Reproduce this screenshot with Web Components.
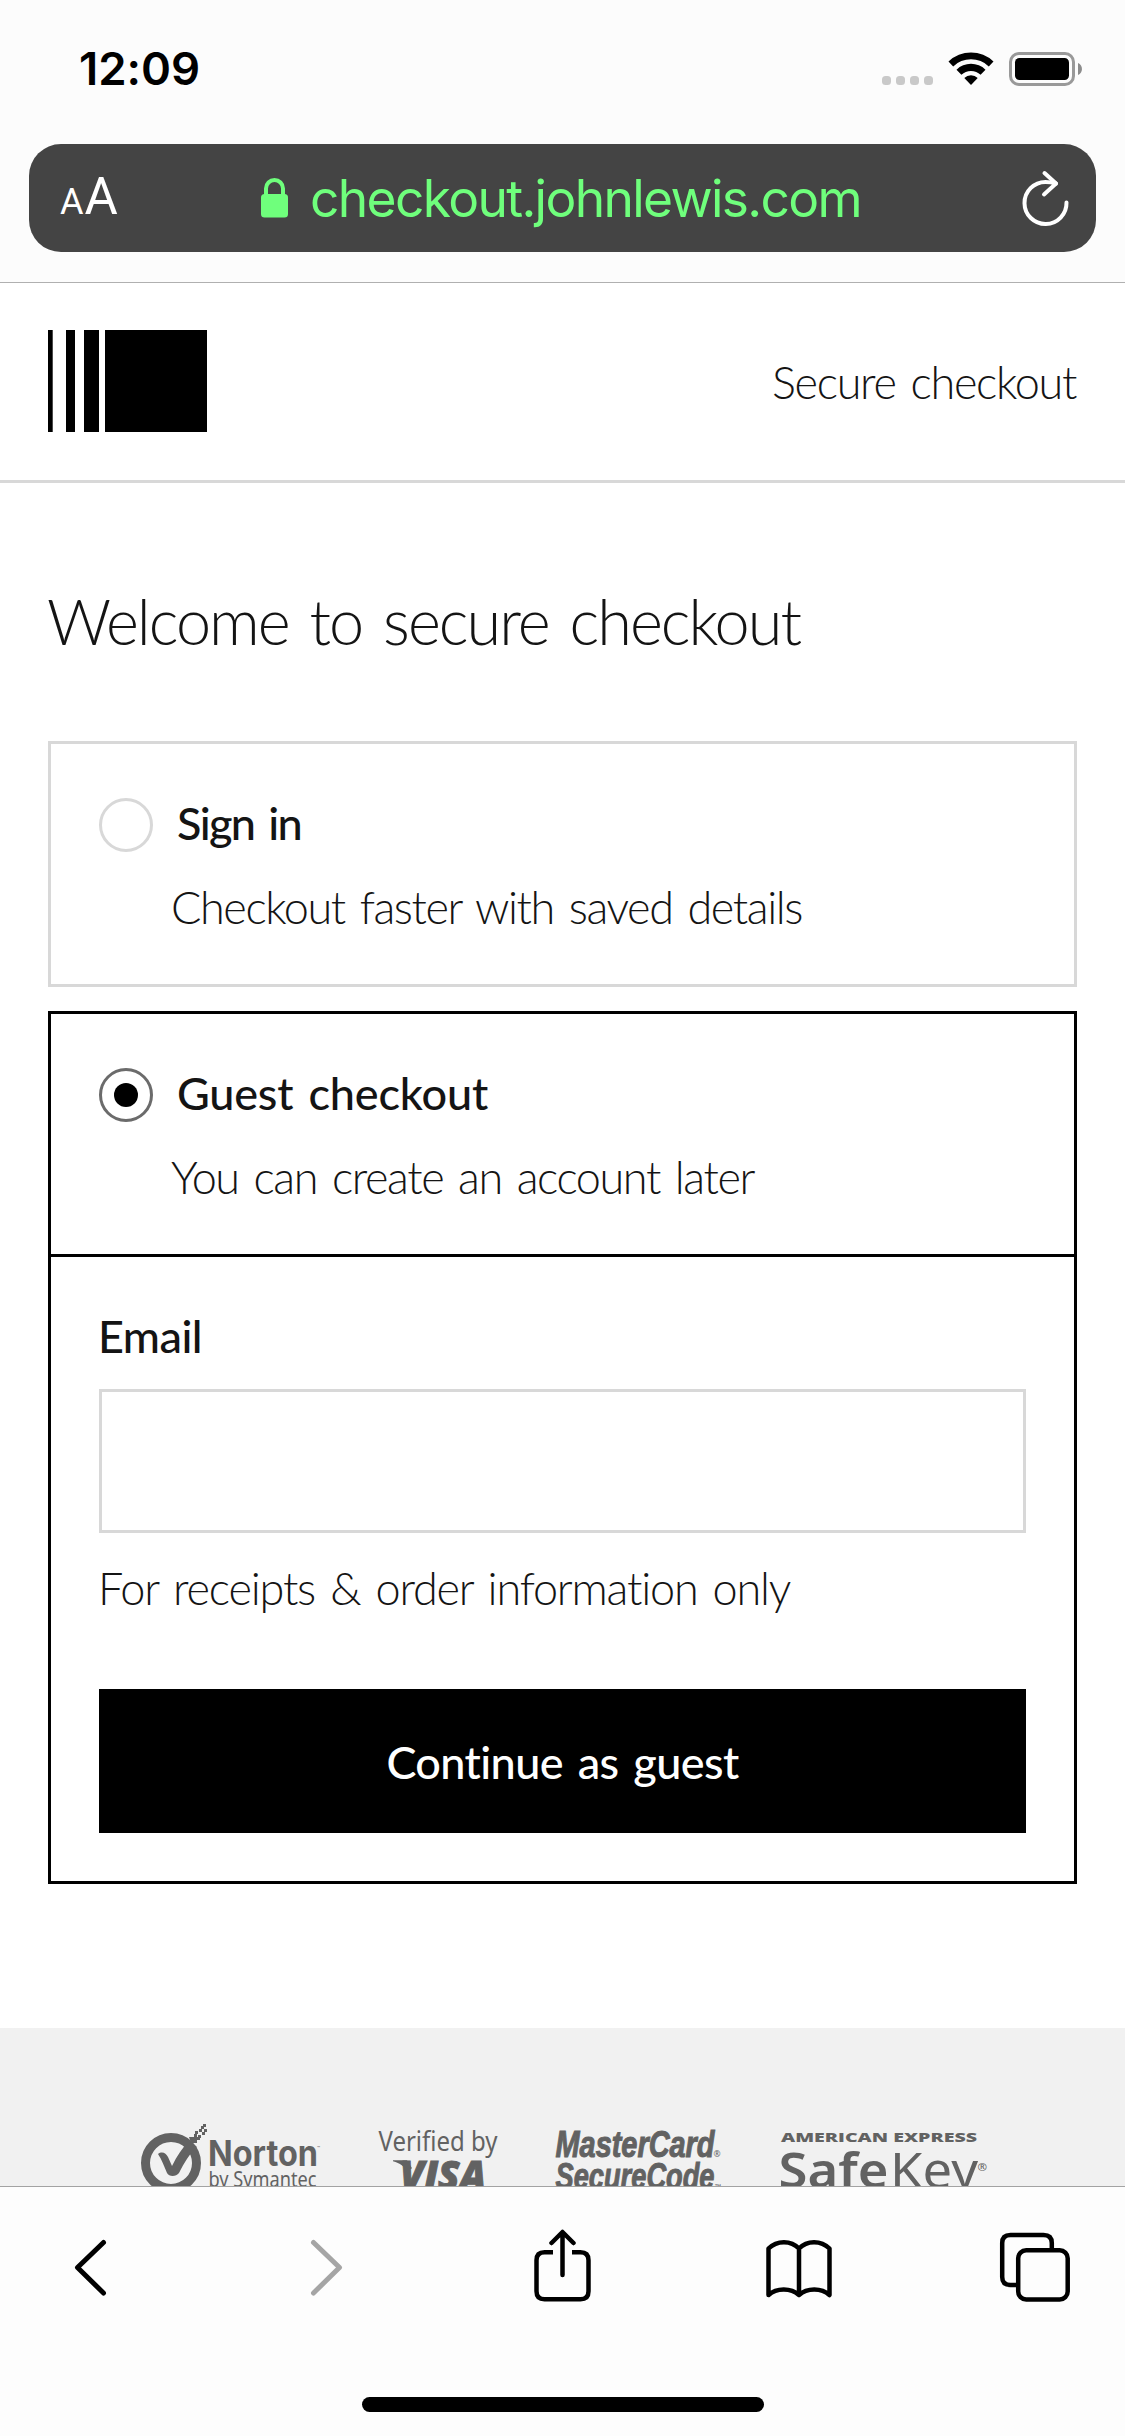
<!DOCTYPE html>
<html lang="en">
<head>
<meta charset="utf-8">
<title>Secure checkout</title>
<style>
    body {
        margin: 0;
        background: #fff;
        color: #141414;
        font-family: Lato, "Liberation Sans", sans-serif;
    }
</style>
</head>
<body>
<checkout-screen>
    <status-bar slot="top" time="12:09"></status-bar>
    <address-bar slot="top"><fit-text width="551">checkout.johnlewis.com</fit-text></address-bar>

    <site-header><fit-text width="304">Secure checkout</fit-text></site-header>
    <checkout-main>
        <fit-text slot="title" width="753">Welcome to secure checkout</fit-text>
        <option-card>
            <fit-text slot="label" width="124">Sign in</fit-text>
            <fit-text slot="detail" width="631">Checkout faster with saved details</fit-text>
        </option-card>
        <option-card selected>
            <fit-text slot="label" width="311">Guest checkout</fit-text>
            <fit-text slot="detail" width="583">You can create an account later</fit-text>
            <guest-form slot="form">
                <fit-text slot="label" width="104">Email</fit-text>
                <fit-text slot="hint" width="693">For receipts &amp; order information only</fit-text>
                <fit-text slot="action" width="353">Continue as guest</fit-text>
            </guest-form>
        </option-card>
    </checkout-main>
    <trust-footer></trust-footer>

    <tool-bar slot="bottom"></tool-bar>
</checkout-screen>

<script>
class BaseElement extends HTMLElement {
    connectedCallback() {
        if (this.shadowRoot) return;
        this.attachShadow({mode: "open"});
        this.shadowRoot.innerHTML = this.render();
    }
}

// Spreads a single line of text over a given width with letter spacing
class FitText extends BaseElement {
    connectedCallback() {
        super.connectedCallback();
        const span = this.shadowRoot.querySelector("span");
        const target = Number(this.getAttribute("width"));
        const spacing = (target - span.getBoundingClientRect().width) / this.textContent.length;
        span.style.letterSpacing = `${spacing}px`;
    }

    render() {
        return `
            <style>
                :host { display: block; white-space: nowrap; }
                span { display: inline-block; word-spacing: 0.09em; }
            </style>
            <span><slot></slot></span>
        `;
    }
}

class CheckoutScreen extends BaseElement {
    render() {
        return `
            <style>
                :host {
                    display: flex;
                    flex-direction: column;
                    width: 1125px;
                    height: 2436px;
                    overflow: hidden;
                }
                .top {
                    flex: none;
                    box-sizing: border-box;
                    height: 283px;
                    background: #fcfcfc;
                    border-bottom: 1px solid #b0b0b0;
                }
                .page { flex: 1; min-height: 0; overflow: hidden; }
            </style>
            <div class="top"><slot name="top"></slot></div>
            <div class="page"><slot></slot></div>
            <slot name="bottom"></slot>
        `;
    }
}

class StatusBar extends BaseElement {
    render() {
        return `
            <style>
                :host {
                    display: flex;
                    align-items: center;
                    justify-content: space-between;
                    box-sizing: border-box;
                    height: 138px;
                    padding: 0 43px 0 79px;
                    color: #000;
                    font: 600 45.5px/54px Inter, "Liberation Sans", sans-serif;
                }
                svg { display: block; }
            </style>
            <fit-text width="121">${this.getAttribute("time")}</fit-text>
            <svg width="201" height="36" viewBox="881 51 201 36">
                <g fill="#c9c9c9">
                    <rect x="882" y="76" width="9" height="9" rx="3.5"/>
                    <rect x="896" y="76" width="9" height="9" rx="3.5"/>
                    <rect x="910" y="76" width="9" height="9" rx="3.5"/>
                    <rect x="924" y="76" width="9" height="9" rx="3.5"/>
                </g>
                <path d="M948.5 61.5a32.5 32.5 0 0 1 45 0l-4.7 4.9a25.6 25.6 0 0 0-35.6 0z"/>
                <path d="M956.5 69.7a20.8 20.8 0 0 1 29 0l-4.9 5.1a13.9 13.9 0 0 0-19.2 0z"/>
                <path d="M964.3 78a9.7 9.7 0 0 1 13.4 0L971 85z"/>
                <rect x="1010.5" y="53.5" width="63" height="31" rx="8.5" fill="none" stroke="#999" stroke-width="3"/>
                <rect x="1015" y="58" width="54" height="22" rx="4.5"/>
                <path fill="#8c8c8c" d="M1078 63c5.3 2 5.3 10 0 12z"/>
            </svg>
        `;
    }
}

class AddressBar extends BaseElement {
    render() {
        return `
            <style>
                :host {
                    display: flex;
                    align-items: center;
                    box-sizing: border-box;
                    height: 108px;
                    margin: 6px 29px 0;
                    padding: 0 27px 0 31px;
                    border-radius: 32px;
                    background: #444;
                    color: #6fff7c;
                    font: 400 51.5px/60px Inter, "Liberation Sans", sans-serif;
                }
                .size {
                    display: flex;
                    align-items: baseline;
                    gap: 1px;
                    width: 201px;
                    padding-top: 2px;
                    color: #fff;
                    font-family: Roboto, "Liberation Sans", sans-serif;
                    font-size: 51px;
                }
                .size small { font-size: 36px; }
                .url { display: flex; align-items: center; gap: 22px; flex: 1; }
                svg { display: block; }
            </style>
            <div class="size"><small>A</small>A</div>
            <div class="url">
                <svg width="27" height="40" viewBox="0 0 27 40">
                    <rect y="16" width="27" height="23.5" rx="3.5" fill="currentColor"/>
                    <path d="M5 18v-7.5a8.5 8.5 0 0 1 17 0V18" fill="none" stroke="currentColor" stroke-width="4"/>
                </svg>
                <slot></slot>
            </div>
            <svg width="48" height="58" viewBox="1021 169 48 58" fill="none" stroke="#fff" stroke-width="4" stroke-linecap="round" stroke-linejoin="round">
                <path d="M1066.5 202.5a21 21 0 1 1-21-20.5q5 0 10.5 1.5"/>
                <path d="M1044.5 173l11.5 10.5-12 11"/>
            </svg>
        `;
    }
}

class SiteHeader extends BaseElement {
    render() {
        return `
            <style>
                :host {
                    display: flex;
                    align-items: center;
                    justify-content: space-between;
                    box-sizing: border-box;
                    height: 200px;
                    padding: 0 49px 0 48px;
                    border-bottom: 3px solid #d8d8d8;
                    font-size: 45px;
                    font-weight: 300;
                    line-height: 54px;
                }
                svg { display: block; margin-bottom: 1px; }
            </style>
            <svg width="159" height="102" viewBox="0 0 159 102">
                <path d="M0 0h4.7v102H0zM18 0h9v102h-9zM36 0h15v102H36zM57 0h102v102H57z"/>
            </svg>
            <slot></slot>
        `;
    }
}

class CheckoutMain extends BaseElement {
    render() {
        return `
            <style>
                :host {
                    display: flex;
                    flex-direction: column;
                    gap: 24px;
                    padding: 98px 48px 144px;
                }
                h1 {
                    margin: 0 0 56px -1px;
                    font-size: 63px;
                    font-weight: 300;
                    line-height: 80px;
                }
            </style>
            <h1><slot name="title"></slot></h1>
            <slot></slot>
        `;
    }
}

class OptionCard extends BaseElement {
    render() {
        return `
            <style>
                :host {
                    display: block;
                    border: 3px solid #d8d8d8;
                    font-size: 45px;
                    line-height: 54px;
                }
                :host([selected]) { border-color: #000; }
                .option { padding: 54px 48px 50px; }
                .row { display: flex; gap: 24px; }
                .radio {
                    display: grid;
                    place-items: center;
                    box-sizing: border-box;
                    width: 54px;
                    height: 54px;
                    border: 3px solid #d8d8d8;
                    border-radius: 50%;
                }
                :host([selected]) .radio { border-color: #6b6b6b; }
                :host([selected]) .radio::after {
                    content: "";
                    width: 24px;
                    height: 24px;
                    border-radius: 50%;
                    background: #000;
                }
                .label { font-weight: 500; line-height: 50px; }
                .detail { padding: 28px 0 0 72px; font-weight: 300; }
                .form { border-top: 3px solid #000; }
                :host(:not([selected])) .form { display: none; }
            </style>
            <div class="option">
                <div class="row">
                    <div class="radio"></div>
                    <div class="label"><slot name="label"></slot></div>
                </div>
                <div class="detail"><slot name="detail"></slot></div>
            </div>
            <div class="form"><slot name="form"></slot></div>
        `;
    }
}

class GuestForm extends BaseElement {
    render() {
        return `
            <style>
                :host { display: block; padding: 52px 48px 48px; }
                label { display: block; margin-left: -1px; font-weight: 500; }
                input {
                    display: block;
                    box-sizing: border-box;
                    width: 100%;
                    height: 144px;
                    margin: 26px 0 28px;
                    padding: 0 24px;
                    border: 3px solid #d8d8d8;
                    background: #fff;
                    font: inherit;
                }
                .hint { margin-left: -1px; font-weight: 300; }
                button {
                    display: flex;
                    align-items: center;
                    justify-content: center;
                    box-sizing: border-box;
                    width: 100%;
                    height: 144px;
                    margin-top: 74px;
                    padding: 2px 0 0;
                    border: 0;
                    background: #000;
                    color: #fff;
                    font: 500 45px/54px Lato, "Liberation Sans", sans-serif;
                }
            </style>
            <label for="email"><slot name="label"></slot></label>
            <input id="email" type="email">
            <div class="hint"><slot name="hint"></slot></div>
            <button type="button"><slot name="action"></slot></button>
        `;
    }
}

class TrustFooter extends BaseElement {
    render() {
        return `
            <style>
                :host {
                    display: flex;
                    align-items: flex-start;
                    box-sizing: border-box;
                    height: 220px;
                    padding: 92px 0 0 138px;
                    background: #f1f1f1;
                }
                svg { flex: none; display: block; fill: #626262; }
                .norton { margin-right: 50px; }
                .visa { margin-right: 50px; }
                .mastercard { margin-right: 46px; }
            </style>
            <!-- Norton by Symantec -->
            <svg class="norton" width="186" height="80" viewBox="138 2120 186 80">
                <circle cx="171" cy="2163" r="25.500" fill="none" stroke="#626262" stroke-width="9"/>
                <path d="M158 2154c4-3 8-1 10 3l4 9c5-10 10-18 17-25l8 6c-7 6-13 16-18 26-3 4-10 4-12 0-3-7-5-13-9-19z"/>
                <path d="M189 2137h5v-3h3v3h3v3h-3v3h-6zM195 2131h3v3h-3zM199 2129h3v3h-3zM202 2132h3v3h-3zM201 2126h3v3h-3zM204 2129h3v3h-3zM198 2135h3v3h-3zM203 2124h3v3h-3z"/>
                <text x="208" y="2165.500" font-family="Inter" font-weight="700" font-size="35.500" textLength="110" lengthAdjust="spacingAndGlyphs">Norton</text>
                <text x="317" y="2150" font-family="Inter" font-size="5">™</text>
                <text x="208.500" y="2187" font-family="Noto Sans" font-size="21" textLength="108" lengthAdjust="spacingAndGlyphs">by Symantec</text>
            </svg>
            <!-- Verified by Visa -->
            <svg class="visa" width="128" height="80" viewBox="374 2120 128 80">
                <text x="378.500" y="2151" font-family="Noto Sans" font-size="27.500" textLength="119" lengthAdjust="spacingAndGlyphs">Verified by</text>
                <path d="M393 2160.300h14l5 8-6 3c-1-5-6-8-13-10z"/>
                <text x="400" y="2189.500" font-family="Open Sans" font-style="italic" font-weight="800" font-size="40.500" textLength="86" lengthAdjust="spacingAndGlyphs" stroke="#626262">VISA</text>
            </svg>
            <!-- MasterCard SecureCode -->
            <svg class="mastercard" width="180" height="80" viewBox="552 2120 180 80">
                <g font-family="Liberation Sans" font-style="italic" font-weight="700" font-size="36" stroke="#626262">
                    <text x="555.500" y="2156.500" textLength="159" lengthAdjust="spacingAndGlyphs">MasterCard</text>
                    <text x="555.500" y="2189" textLength="159" lengthAdjust="spacingAndGlyphs">SecureCode</text>
                </g>
                <text x="713.500" y="2157" font-family="Noto Sans" font-size="8.500">®</text>
                <text x="715" y="2189.500" font-family="Noto Sans" font-size="8">™</text>
            </svg>
            <!-- American Express SafeKey -->
            <svg width="214" height="80" viewBox="778 2120 214 80">
                <text x="781" y="2142" font-family="Open Sans" font-weight="800" font-size="13" textLength="196" lengthAdjust="spacingAndGlyphs">AMERICAN EXPRESS</text>
                <text x="778.500" y="2187.500" font-family="Noto Sans" font-weight="600" font-size="49" textLength="110" lengthAdjust="spacingAndGlyphs">Safe</text>
                <text x="890" y="2187.500" font-family="Noto Sans" font-weight="400" font-size="49" textLength="88" lengthAdjust="spacingAndGlyphs">Key</text>
                <text x="977.500" y="2170.500" font-family="Noto Sans" font-size="11.500">®</text>
            </svg>
        `;
    }
}

class ToolBar extends BaseElement {
    render() {
        return `
            <style>
                :host {
                    display: flex;
                    flex-direction: column;
                    flex: none;
                    box-sizing: border-box;
                    height: 250px;
                    border-top: 1px solid #a3a3a3;
                    background: #fdfdfd;
                }
                nav {
                    display: flex;
                    justify-content: space-between;
                    box-sizing: border-box;
                    height: 168px;
                    padding: 42px 52px 0 53px;
                }
                svg {
                    display: block;
                    fill: none;
                    stroke: #000;
                    stroke-width: 4.5;
                    stroke-linecap: round;
                    stroke-linejoin: round;
                }
                .chevron { stroke-width: 5; }
                .disabled { stroke: #a5a5a5; }
                .home {
                    width: 402px;
                    height: 15px;
                    margin: 42px auto 0;
                    border-radius: 7.5px;
                    background: #000;
                }
            </style>
            <nav>
                <svg class="chevron" width="76" height="76" viewBox="53 2229 76 76"><path d="M103.500 2242.500L77.500 2267.500l26 25.500"/></svg>
                <svg class="chevron disabled" width="76" height="76" viewBox="289 2229 76 76"><path d="M313.500 2242.500l26 25-26 25.500"/></svg>
                <svg width="76" height="76" viewBox="525 2229 76 76">
                    <path stroke-linecap="butt" d="M553 2252.300h-8.500q-8 0-8 8v31q0 8 8 8h36q8 0 8-8v-31q0-8-8-8H572"/>
                    <path d="M562.500 2275V2232.500M551.500 2243l11-11 11 11"/>
                </svg>
                <svg width="76" height="76" viewBox="761 2229 76 76">
                    <path d="M799 2248.500c-8-8.500-22-8.500-30.500 0V2295c8-7.500 22.500-7.500 30.500 0 8-7.500 22.500-7.500 30.500 0v-46.500c-8.500-8.500-22.500-8.500-30.500 0V2295"/>
                </svg>
                <svg width="76" height="76" viewBox="997 2229 76 76">
                    <path stroke-linecap="butt" d="M1018 2285h-7.500q-8.300 0-8.300-8v-34q0-8 8.300-8h33q8.300 0 8.300 8v7"/>
                    <rect x="1018.200" y="2250.300" width="49.500" height="49.200" rx="8"/>
                </svg>
            </nav>
            <div class="home"></div>
        `;
    }
}

customElements.define("checkout-screen", CheckoutScreen);
customElements.define("status-bar", StatusBar);
customElements.define("address-bar", AddressBar);
customElements.define("site-header", SiteHeader);
customElements.define("checkout-main", CheckoutMain);
customElements.define("option-card", OptionCard);
customElements.define("guest-form", GuestForm);
customElements.define("trust-footer", TrustFooter);
customElements.define("tool-bar", ToolBar);
// Measured last, once every parent has its fonts in place
customElements.define("fit-text", FitText);
</script>
</body>
</html>
